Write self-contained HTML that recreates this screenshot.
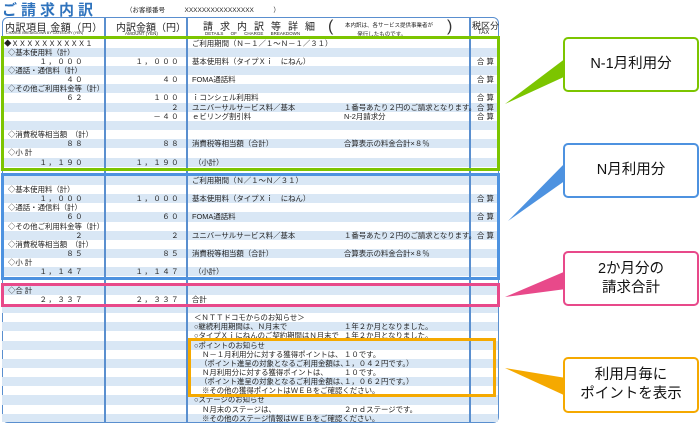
<!DOCTYPE html>
<html><head><meta charset="utf-8"><style>
*{margin:0;padding:0;box-sizing:border-box}
body{width:700px;height:424px;background:#fff;position:relative;overflow:hidden;font-family:"Liberation Sans","Noto Sans CJK JP",sans-serif;color:#222}
.a{position:absolute;white-space:nowrap}
.row{position:absolute;left:2px;width:496px;height:9.15px}
.b{background:#d9e7f5}
.t{position:absolute;font-size:7.4px;line-height:9px;white-space:nowrap}
.n{text-align:right;letter-spacing:1.5px}
.vl{position:absolute;width:2px;background:#5a8fcf;top:17px;height:405px}
.box{position:absolute;border:3px solid}
.co{position:absolute;background:#fff;border:2.5px solid;border-radius:5px;font-size:14.5px;text-align:center;color:#111;display:flex;align-items:center;justify-content:center;line-height:19px}
</style></head><body>
<div class="a" style="left:2px;top:-1px;font-size:15px;color:#2f73bd;letter-spacing:4px;font-weight:bold">ご請求内訳</div>
<div class="a" style="left:126px;top:4px;font-size:6.5px">（お客様番号　　　XXXXXXXXXXXXXXXX　　　）</div>
<!-- table frame -->
<div style="position:absolute;left:2px;top:17px;width:497px;height:406px;border:1.5px solid #5a8fcf;border-radius:6px 6px 6px 6px"></div>
<div id="rows"></div>
<div class="vl" style="left:104px"></div>
<div class="vl" style="left:186px"></div>
<div class="vl" style="left:469px"></div>
<!-- header -->
<div class="a" style="left:5px;top:19px;font-size:10px;letter-spacing:0.5px">内訳項目 金額（円）</div>
<div class="a" style="left:6px;top:31px;font-size:3.6px">CHARGE BREAKDOWN BY CATEGORY (YEN)</div>
<div class="a" style="left:116px;top:19px;font-size:10px">内訳金額（円）</div>
<div class="a" style="left:125px;top:31px;font-size:4.5px">AMOUNT (YEN)</div>
<div class="a" style="left:203px;top:18px;font-size:10px;letter-spacing:7px">請求内訳等詳細</div>
<div class="a" style="left:205px;top:31px;font-size:4.5px;word-spacing:6px">DETAILS OF CHARGE BREAKDOWN</div>
<div class="a" style="left:328px;top:18px;font-size:16px;color:#333">(</div>
<div class="a" style="left:447px;top:18px;font-size:16px;color:#333">)</div>
<div class="a" style="left:345px;top:22px;font-size:5.5px;line-height:9px">本内訳は、各サービス提供事業者が<br>&nbsp;&nbsp;&nbsp;&nbsp;&nbsp;&nbsp;&nbsp;&nbsp;発行したものです。</div>
<div class="a" style="left:472px;top:19px;font-size:9px">税区分</div>
<div class="a" style="left:478px;top:30px;font-size:6px">TAX</div>

<!-- rows (pitch 9.15 from 38.5) -->
<div class="row" style="top:47.65px" ></div>
<div style="position:absolute;left:2px;top:38.5px;width:496px">
</div>

<div id="r">
<!-- striped backgrounds -->
<div class="row b" style="top:47.7px"></div><div class="row b" style="top:66px"></div><div class="row b" style="top:84.3px"></div><div class="row b" style="top:102.6px"></div><div class="row b" style="top:120.9px"></div><div class="row b" style="top:139.2px"></div><div class="row b" style="top:157.5px"></div><div class="row b" style="top:175.8px"></div><div class="row b" style="top:194.1px"></div><div class="row b" style="top:212.4px"></div><div class="row b" style="top:230.7px"></div><div class="row b" style="top:249px"></div><div class="row b" style="top:267.3px"></div><div class="row b" style="top:285.6px"></div><div class="row b" style="top:303.9px"></div><div class="row b" style="top:322.2px"></div><div class="row b" style="top:340.5px"></div><div class="row b" style="top:358.8px"></div><div class="row b" style="top:377.1px"></div><div class="row b" style="top:395.4px"></div><div class="row b" style="top:413.7px;height:8px"></div>
</div>
<div class="vl" style="left:104px;top:38px;height:384px"></div>
<div class="vl" style="left:186px;top:38px;height:384px"></div>
<div class="vl" style="left:469px;top:38px;height:384px"></div>

<!-- text -->
<div class="t" style="left:4px;top:38.5px">◆ＸＸＸＸＸＸＸＸＸＸ１</div>
<div class="t" style="left:192px;top:38.5px">ご利用期間（Ｎ－１／１～Ｎ－１／３１）</div>
<div class="t" style="left:8px;top:47.7px">◇基本使用料（計）</div>
<div class="t n" style="left:8px;width:76px;top:56.8px">１，０００</div>
<div class="t n" style="left:108px;width:72px;top:56.8px">１，０００</div>
<div class="t" style="left:192px;top:56.8px">基本使用料（タイプＸｉ　にねん）</div>
<div class="t" style="left:477px;top:56.8px">合 算</div>
<div class="t" style="left:8px;top:66px">◇通話・通信料（計）</div>
<div class="t n" style="left:8px;width:76px;top:75.1px">４０</div>
<div class="t n" style="left:108px;width:72px;top:75.1px">４０</div>
<div class="t" style="left:192px;top:75.1px">FOMA通話料</div>
<div class="t" style="left:477px;top:75.1px">合 算</div>
<div class="t" style="left:8px;top:84.3px">◇その他ご利用料金等（計）</div>
<div class="t n" style="left:8px;width:76px;top:93.4px">６２</div>
<div class="t n" style="left:108px;width:72px;top:93.4px">１００</div>
<div class="t" style="left:192px;top:93.4px">ｉコンシェル利用料</div>
<div class="t" style="left:477px;top:93.4px">合 算</div>
<div class="t n" style="left:108px;width:72px;top:102.6px">２</div>
<div class="t" style="left:192px;top:102.6px">ユニバーサルサービス料／基本</div>
<div class="t" style="left:344px;top:102.6px">１番号あたり２円のご請求となります。</div>
<div class="t" style="left:477px;top:102.6px">合 算</div>
<div class="t n" style="left:108px;width:72px;top:111.7px">－４０</div>
<div class="t" style="left:192px;top:111.7px">ｅビリング割引料</div>
<div class="t" style="left:344px;top:111.7px">N-2月請求分</div>
<div class="t" style="left:477px;top:111.7px">合 算</div>
<div class="t" style="left:8px;top:130px">◇消費税等相当額　（計）</div>
<div class="t n" style="left:8px;width:76px;top:139.2px">８８</div>
<div class="t n" style="left:108px;width:72px;top:139.2px">８８</div>
<div class="t" style="left:192px;top:139.2px">消費税等相当額（合計）</div>
<div class="t" style="left:344px;top:139.2px">合算表示の料金合計×８％</div>
<div class="t" style="left:8px;top:148.3px">◇小 計</div>
<div class="t n" style="left:8px;width:76px;top:157.5px">１，１９０</div>
<div class="t n" style="left:108px;width:72px;top:157.5px">１，１９０</div>
<div class="t" style="left:194px;top:157.5px">（小計）</div>

<div class="t" style="left:192px;top:175.8px">ご利用期間（Ｎ／１～Ｎ／３１）</div>
<div class="t" style="left:8px;top:184.9px">◇基本使用料（計）</div>
<div class="t n" style="left:8px;width:76px;top:194.1px">１，０００</div>
<div class="t n" style="left:108px;width:72px;top:194.1px">１，０００</div>
<div class="t" style="left:192px;top:194.1px">基本使用料（タイプＸｉ　にねん）</div>
<div class="t" style="left:477px;top:194.1px">合 算</div>
<div class="t" style="left:8px;top:203.2px">◇通話・通信料（計）</div>
<div class="t n" style="left:8px;width:76px;top:212.4px">６０</div>
<div class="t n" style="left:108px;width:72px;top:212.4px">６０</div>
<div class="t" style="left:192px;top:212.4px">FOMA通話料</div>
<div class="t" style="left:477px;top:212.4px">合 算</div>
<div class="t" style="left:8px;top:221.5px">◇その他ご利用料金等（計）</div>
<div class="t n" style="left:8px;width:76px;top:230.7px">２</div>
<div class="t n" style="left:108px;width:72px;top:230.7px">２</div>
<div class="t" style="left:192px;top:230.7px">ユニバーサルサービス料／基本</div>
<div class="t" style="left:344px;top:230.7px">１番号あたり２円のご請求となります。</div>
<div class="t" style="left:477px;top:230.7px">合 算</div>
<div class="t" style="left:8px;top:239.8px">◇消費税等相当額　（計）</div>
<div class="t n" style="left:8px;width:76px;top:249px">８５</div>
<div class="t n" style="left:108px;width:72px;top:249px">８５</div>
<div class="t" style="left:192px;top:249px">消費税等相当額（合計）</div>
<div class="t" style="left:344px;top:249px">合算表示の料金合計×８％</div>
<div class="t" style="left:8px;top:258.1px">◇小 計</div>
<div class="t n" style="left:8px;width:76px;top:267.3px">１，１４７</div>
<div class="t n" style="left:108px;width:72px;top:267.3px">１，１４７</div>
<div class="t" style="left:194px;top:267.3px">（小計）</div>

<div class="t" style="left:8px;top:285.6px">◇合 計</div>
<div class="t n" style="left:8px;width:76px;top:294.7px">２，３３７</div>
<div class="t n" style="left:108px;width:72px;top:294.7px">２，３３７</div>
<div class="t" style="left:192px;top:294.7px">合計</div>

<div class="t" style="left:194px;top:313px">＜ＮＴＴドコモからのお知らせ＞</div>
<div class="t" style="left:194px;top:322.2px">○継続利用期間は、Ｎ月末で</div>
<div class="t" style="left:344px;top:322.2px">１年２か月となりました。</div>
<div class="t" style="left:194px;top:331.3px">○タイプＸｉにねんのご契約期間はＮ月末で</div>
<div class="t" style="left:344px;top:331.3px">１年２か月となりました。</div>
<div class="t" style="left:194px;top:340.5px">○ポイントのお知らせ</div>
<div class="t" style="left:202px;top:349.6px">Ｎ－１月利用分に対する獲得ポイントは、</div>
<div class="t" style="left:344px;top:349.6px">１０です。</div>
<div class="t" style="left:200px;top:358.8px">（ポイント進呈の対象となるご利用金額は、</div>
<div class="t" style="left:344px;top:358.8px">１，０４２円です。）</div>
<div class="t" style="left:202px;top:367.9px">Ｎ月利用分に対する獲得ポイントは、</div>
<div class="t" style="left:344px;top:367.9px">１０です。</div>
<div class="t" style="left:200px;top:377.1px">（ポイント進呈の対象となるご利用金額は、</div>
<div class="t" style="left:344px;top:377.1px">１，０６２円です。）</div>
<div class="t" style="left:202px;top:386.2px">※その他の獲得ポイントはＷＥＢをご確認ください。</div>
<div class="t" style="left:194px;top:395.4px">○ステージのお知らせ</div>
<div class="t" style="left:202px;top:404.5px">Ｎ月末のステージは、</div>
<div class="t" style="left:344px;top:404.5px">２ｎｄステージです。</div>
<div class="t" style="left:202px;top:413.7px">※その他のステージ情報はＷＥＢをご確認ください。</div>

<!-- highlight boxes -->
<div class="box" style="left:1px;top:36px;width:499px;height:135px;border-color:#7cc500"></div>
<div class="box" style="left:1px;top:173px;width:499px;height:107px;border-color:#4d92e0"></div>
<div class="box" style="left:1px;top:283px;width:499px;height:24px;border-color:#e8498a"></div>
<div class="box" style="left:188px;top:338px;width:308px;height:59px;border-color:#f5a900"></div>

<!-- pointers -->
<svg class="a" style="left:0;top:0" width="700" height="424">
<polygon points="505,104 566,58 566,76" fill="#7cc500"/>
<polygon points="508,221 566,162 566,180" fill="#4d92e0"/>
<polygon points="505,297 566,271 566,289" fill="#e8498a"/>
<polygon points="505,368 566,378 566,396" fill="#f5a900"/>
</svg>
<div class="co" style="left:563px;top:37px;width:136px;height:55px;border-color:#7cc500">N-1月利用分</div>
<div class="co" style="left:563px;top:143px;width:136px;height:55px;border-color:#4d92e0">N月利用分</div>
<div class="co" style="left:563px;top:251px;width:136px;height:55px;border-color:#e8498a">2か月分の<br>請求合計</div>
<div class="co" style="left:563px;top:357px;width:136px;height:56px;border-color:#f5a900">利用月毎に<br>ポイントを表示</div>
</body></html>
